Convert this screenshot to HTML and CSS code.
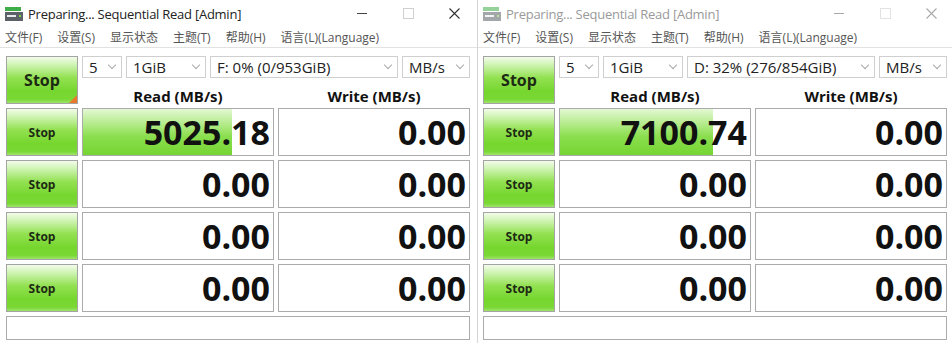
FILE: index.html
```html
<!DOCTYPE html>
<html lang="zh-CN">
<head>
    <meta charset="UTF-8">
    <meta name="viewport" content="width=device-width, initial-scale=1.0">
    <title>CrystalDiskMark</title>
    <link rel="stylesheet" href="styles.css">
</head>
<body>
    <div class="desktop">
        <!-- left window: F: drive -->
        <div class="window">
            <div class="titlebar">
                <svg class="app-icon" width="18" height="14" viewBox="0 0 18 14">
                    <rect x="0" y="0" width="16" height="4" fill="#3fae49"/>
                    <rect x="0" y="5" width="18" height="9" fill="#5b6166"/>
                    <rect x="2" y="8" width="9" height="2" fill="#e9ecee"/>
                    <rect x="14" y="8" width="2" height="2" fill="#7fd14a"/>
                </svg>
                <span class="title">Preparing... Sequential Read [Admin]</span>
                <div class="caption">
                    <span class="cap-btn"><i class="min"></i></span>
                    <span class="cap-btn"><i class="max"></i></span>
                    <span class="cap-btn">
                        <svg width="11" height="11" viewBox="0 0 11 11"><path d="M0.5 0.5 L10.5 10.5 M10.5 0.5 L0.5 10.5" stroke="currentColor" stroke-width="1.1"/></svg>
                    </span>
                </div>
            </div>
            <div class="menubar">
                <span>文件(F)</span>
                <span>设置(S)</span>
                <span>显示状态</span>
                <span>主题(T)</span>
                <span>帮助(H)</span>
                <span>语言(L)(Language)</span>
            </div>
            <div class="client">
                <div class="stop stop-main">Stop<i class="corner"></i></div>
                <div class="controls">
                    <div class="combos">
                        <div class="combo c-count">5<i class="chev"></i></div>
                        <div class="combo c-size">1GiB<i class="chev"></i></div>
                        <div class="combo c-drive">F: 0% (0/953GiB)<i class="chev"></i></div>
                        <div class="combo c-unit">MB/s<i class="chev"></i></div>
                    </div>
                    <div class="heads">
                        <span>Read (MB/s)</span>
                        <span>Write (MB/s)</span>
                    </div>
                </div>

                <div class="stop">Stop</div>
                <div class="cell"><div class="bar" style="width: 78.4%"></div><span class="num">5025.18</span></div>
                <div class="cell"><span class="num">0.00</span></div>

                <div class="stop">Stop</div>
                <div class="cell"><span class="num">0.00</span></div>
                <div class="cell"><span class="num">0.00</span></div>

                <div class="stop">Stop</div>
                <div class="cell"><span class="num">0.00</span></div>
                <div class="cell"><span class="num">0.00</span></div>

                <div class="stop">Stop</div>
                <div class="cell"><span class="num">0.00</span></div>
                <div class="cell"><span class="num">0.00</span></div>

                <div class="comment"></div>
            </div>
        </div>

        <!-- right window: D: drive (inactive) -->
        <div class="window inactive">
            <div class="titlebar">
                <svg class="app-icon" width="18" height="14" viewBox="0 0 18 14">
                    <rect x="0" y="0" width="16" height="4" fill="#3fae49"/>
                    <rect x="0" y="5" width="18" height="9" fill="#5b6166"/>
                    <rect x="2" y="8" width="9" height="2" fill="#e9ecee"/>
                    <rect x="14" y="8" width="2" height="2" fill="#7fd14a"/>
                </svg>
                <span class="title">Preparing... Sequential Read [Admin]</span>
                <div class="caption">
                    <span class="cap-btn"><i class="min"></i></span>
                    <span class="cap-btn"><i class="max"></i></span>
                    <span class="cap-btn">
                        <svg width="11" height="11" viewBox="0 0 11 11"><path d="M0.5 0.5 L10.5 10.5 M10.5 0.5 L0.5 10.5" stroke="currentColor" stroke-width="1.1"/></svg>
                    </span>
                </div>
            </div>
            <div class="menubar">
                <span>文件(F)</span>
                <span>设置(S)</span>
                <span>显示状态</span>
                <span>主题(T)</span>
                <span>帮助(H)</span>
                <span>语言(L)(Language)</span>
            </div>
            <div class="client">
                <div class="stop stop-main">Stop</div>
                <div class="controls">
                    <div class="combos">
                        <div class="combo c-count">5<i class="chev"></i></div>
                        <div class="combo c-size">1GiB<i class="chev"></i></div>
                        <div class="combo c-drive">D: 32% (276/854GiB)<i class="chev"></i></div>
                        <div class="combo c-unit">MB/s<i class="chev"></i></div>
                    </div>
                    <div class="heads">
                        <span>Read (MB/s)</span>
                        <span>Write (MB/s)</span>
                    </div>
                </div>

                <div class="stop">Stop</div>
                <div class="cell"><div class="bar" style="width: 80.5%"></div><span class="num">7100.74</span></div>
                <div class="cell"><span class="num">0.00</span></div>

                <div class="stop">Stop</div>
                <div class="cell"><span class="num">0.00</span></div>
                <div class="cell"><span class="num">0.00</span></div>

                <div class="stop">Stop</div>
                <div class="cell"><span class="num">0.00</span></div>
                <div class="cell"><span class="num">0.00</span></div>

                <div class="stop">Stop</div>
                <div class="cell"><span class="num">0.00</span></div>
                <div class="cell"><span class="num">0.00</span></div>

                <div class="comment"></div>
            </div>
        </div>
    </div>
</body>
</html>
```

FILE: styles.css
```css
body {
    margin: 0;
    background: #fff;
    font-family: "Open Sans", "Noto Sans CJK SC", sans-serif;
    color: #1a1a1a;
    overflow: hidden;
}
.desktop {
    display: flex;
    width: 952px;
    height: 343px;
    overflow: hidden;
}
.window {
    flex: none;
    width: 477px;
    background: #fff;
}
.window.inactive {
    width: 476px;
    border-left: 1px solid #d4d4d4;
}

/* title bar */
.titlebar {
    display: flex;
    align-items: center;
    height: 27px;
}
.app-icon {
    margin: 0 5px 0 5px;
    flex: none;
}
.title {
    font-size: 13px;
    letter-spacing: -0.25px;
    color: #222;
    white-space: nowrap;
}
.caption {
    display: flex;
    margin-left: auto;
    height: 100%;
}
.cap-btn {
    width: 46px;
    display: flex;
    align-items: center;
    justify-content: center;
    color: #333;
}
.cap-btn .min {
    width: 10px;
    border-top: 1px solid #444;
}
.cap-btn .max {
    width: 9px;
    height: 9px;
    border: 1px solid #d0d0d0;
}

/* menu */
.menubar {
    display: flex;
    gap: 15px;
    height: 20px;
    align-items: center;
    padding: 0 0 0 5px;
    font-size: 12px;
    color: #555;
    border-bottom: 1px solid #e2e2e2;
}

/* main grid */
.client {
    display: grid;
    grid-template-columns: 72px 192px 192px;
    grid-template-rows: 48px 48px 48px 48px 48px 24px;
    gap: 4px;
    padding: 8px 0 0 6px;
}
.window.inactive .client {
    padding-left: 5px;
}
.stop {
    display: flex;
    align-items: center;
    justify-content: center;
    box-sizing: border-box;
    border: 1px solid #a4a4a4;
    background: linear-gradient(to bottom, #f2fcea 0%, #c8f2a8 20%, #93e152 45%, #76d62e 75%, #7ad834 92%, #9fe36c 100%);
    font-size: 12px;
    font-weight: 700;
    color: #1c2a14;
}
.stop-main {
    position: relative;
    font-size: 16px;
}
.stop-main .corner {
    position: absolute;
    right: 0;
    bottom: 0;
    width: 0;
    height: 0;
    border-left: 8px solid transparent;
    border-bottom: 8px solid #e8792a;
}
.controls {
    grid-column: 2 / span 2;
    display: flex;
    flex-direction: column;
}
.combos {
    display: flex;
    gap: 4px;
    height: 24px;
}
.combo {
    display: flex;
    align-items: center;
    box-sizing: border-box;
    border: 1px solid #cfcfcf;
    padding-left: 6px;
    font-size: 15px;
    color: #222;
    white-space: nowrap;
}
.c-count { width: 40px; }
.c-size { width: 80px; }
.c-drive { width: 188px; }
.c-unit { width: 68px; }
.chev {
    margin-left: auto;
    margin-right: 6px;
    width: 5px;
    height: 5px;
    border-right: 1px solid #aaa;
    border-bottom: 1px solid #aaa;
    transform: translateY(-2px) rotate(45deg);
}
.heads {
    display: grid;
    grid-template-columns: 192px 192px;
    gap: 4px;
    height: 24px;
    padding-top: 8px;
    font-size: 15px;
    font-weight: 700;
    text-align: center;
    color: #111;
}

/* result cells */
.cell {
    display: grid;
    box-sizing: border-box;
    border: 1px solid #ababab;
    background: #fff;
    overflow: hidden;
}
.cell > * {
    grid-area: 1 / 1;
}
.bar {
    background: linear-gradient(to bottom, #e4f8d4 0%, #b8ec90 30%, #8ade4e 60%, #76d532 100%);
}
.num {
    justify-self: end;
    align-self: center;
    padding-right: 3px;
    font-size: 34px;
    font-weight: 700;
    line-height: 46px;
    color: #111;
}
.comment {
    grid-column: 1 / span 3;
    box-sizing: border-box;
    border: 1px solid #ababab;
}

/* inactive window */
.window.inactive .title { color: #9a9a9a; }
.window.inactive .app-icon { opacity: 0.55; }
.window.inactive .cap-btn { color: #aaa; }
.window.inactive .cap-btn .min { border-top-color: #aaa; }
.window.inactive .cap-btn .max { border-color: #e2e2e2; }
```
